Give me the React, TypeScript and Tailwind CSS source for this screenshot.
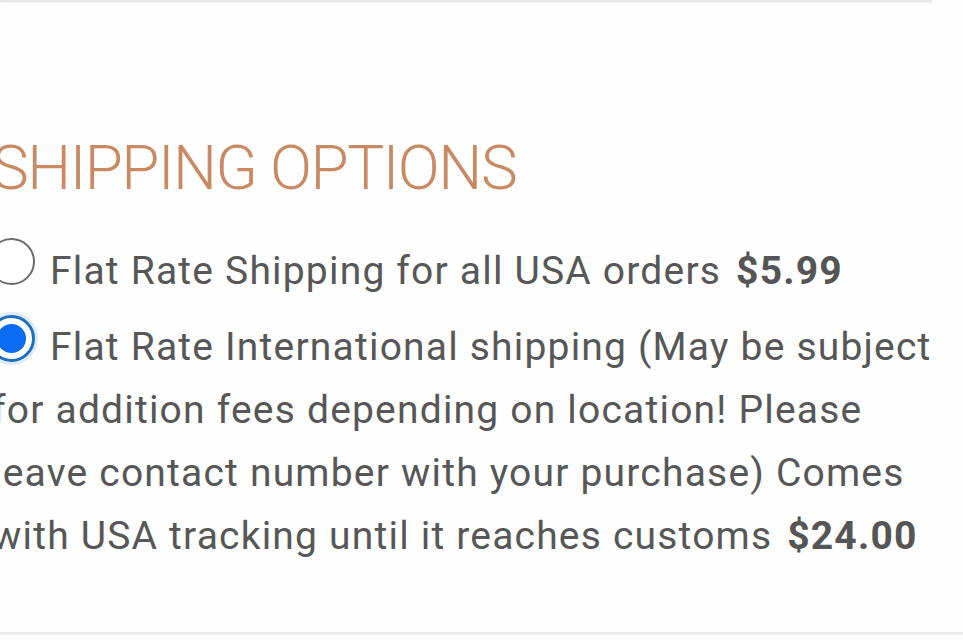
import React from "react";

const Radio = ({ checked }: { checked?: boolean }) => {
  if (checked) {
    return (
      <span className="inline-block h-[47px] w-[47px] -ml-1 mr-[15px] -mb-[2px] rounded-full border-[3px] border-[#1f6fc4] bg-white p-[6px] shadow-[0_0_0_3px_#dcecfa]">
        <span className="block h-full w-full rounded-full bg-[#0a6cf2]" />
      </span>
    );
  }
  return (
    <span className="inline-block h-[47px] w-[47px] -ml-1 mr-[15px] -mb-[1px] rounded-full border-[2.5px] border-[#6b6b6b] bg-white" />
  );
};

export default function App() {
  return (
    <div className="h-[640px] w-[963px] overflow-hidden bg-[#fefefe] font-['Roboto','Liberation_Sans',sans-serif]">
      {/* divider from the section above */}
      <div className="h-[2px] w-[932px] bg-[#e8e8e8] shadow-[0_1px_2px_rgba(0,0,0,0.06)]" />

      <div className="-ml-2 w-[955px]">
        <h2 className="mt-[128px] text-[62px] font-light leading-[76px] tracking-[-1.5px] text-[#c98a63]">
          SHIPPING OPTIONS
        </h2>

        <div className="mt-[32px] text-[39px] leading-[63px] tracking-[1.2px] text-[#575757]">
          <p>
            <Radio />
            Flat Rate Shipping for all USA orders <b className="ml-1 font-bold text-[#555]">$5.99</b>
          </p>
          <p className="mt-[12px]">
            <Radio checked />
            Flat Rate International shipping (May be subject for addition fees depending on location! Please
            leave contact number with your purchase) Comes with USA tracking until it reaches customs{" "}
            <b className="ml-1 font-bold text-[#555]">$24.00</b>
          </p>
        </div>
      </div>

      <div className="mt-[64px] h-[3px] w-full bg-[#ececec]" />
    </div>
  );
}
